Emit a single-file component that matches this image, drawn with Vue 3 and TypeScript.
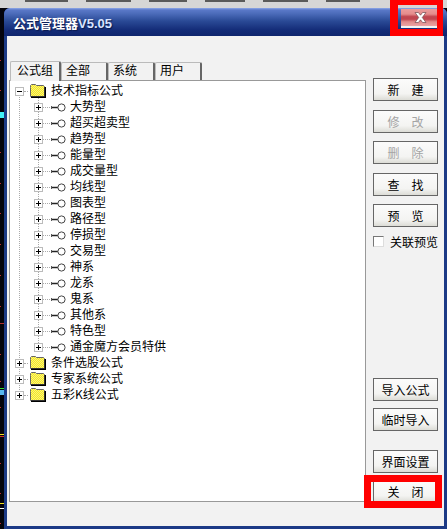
<script setup lang="ts">
const tabs = ['公式组', '全部', '系统', '用户']

const subItems = [
  '大势型', '超买超卖型', '趋势型', '能量型', '成交量型', '均线型', '图表型', '路径型',
  '停损型', '交易型', '神系', '龙系', '鬼系', '其他系', '特色型', '通金魔方会员特供',
]

const otherRoots = ['条件选股公式', '专家系统公式', '五彩K线公式']

const topButtons = [
  { label: '新　建', off: false },
  { label: '修　改', off: true },
  { label: '删　除', off: true },
  { label: '查　找', off: false },
  { label: '预　览', off: false },
]

// text fragments of the window behind the dialog
const deskBits = [43, 45, 38, 40, 45, 34]

// bits of the chart window behind the dialog
const redTicks = [60, 90, 152, 183, 213, 244, 275, 306, 354, 381, 407, 463, 493, 523]
const bars = [
  { y: 112, w: 4, h: 6, c: '#40f0f8' },
  { y: 323, w: 4, h: 1, c: '#b03030' },
  { y: 388, w: 4, h: 1, c: '#30e030' },
  { y: 390, w: 4, h: 5, c: '#58b8f0' },
  { y: 434, w: 4, h: 1, c: '#f0e020' },
  { y: 436, w: 4, h: 1, c: '#d03030' },
  { y: 503, w: 4, h: 1, c: '#f0e020' },
  { y: 508, w: 4, h: 1, c: '#ffffff' },
]
</script>

<template>
  <div class="screen">
    <svg class="defs" width="0" height="0">
      <defs>
        <pattern id="dither" width="2" height="2" patternUnits="userSpaceOnUse">
          <rect width="2" height="2" fill="#f6ea20" />
          <rect width="1" height="1" fill="#f8f080" />
          <rect x="1" y="1" width="1" height="1" fill="#f8f080" />
        </pattern>
      </defs>
    </svg>

    <div class="desk-top">
      <span v-for="(w, i) in deskBits" :key="i" class="desk-bit" :style="{ width: w + 'px' }"></span>
    </div>
    <i v-for="y in redTicks" :key="y" class="tick" :style="{ top: y + 'px' }"></i>
    <i
      v-for="b in bars"
      :key="b.y"
      class="tick"
      :style="{ top: b.y + 'px', width: b.w + 'px', height: b.h + 'px', background: b.c }"
    ></i>

    <div class="win">
      <div class="title-bar">
        <span class="title-text">公式管理器<span class="ver">V5.05</span></span>
        <span class="close-x">
          <svg width="13" height="11" viewBox="0 0 13 11">
            <path d="M1 .5h3.4l2.1 2.7L8.6.5H12L8.3 5.5 12 10.500H8.600L6.500 7.800 4.400 10.500H1l3.700-5z" fill="#fff" stroke="#6e4a50" stroke-width=".7" />
          </svg>
        </span>
      </div>

      <div class="body">
        <div class="left">
          <div class="tabs">
            <div v-for="(t, i) in tabs" :key="t" class="tab" :class="{ on: i === 0 }">{{ t }}</div>
          </div>
          <div class="tree">
            <div class="line-root"></div>
            <div class="line-sub"></div>
            <div class="row">
              <span class="twist">
                <svg width="9" height="9"><path d="M2 4.500h5" stroke="#000" /></svg>
              </span>
              <span class="dash short"></span>
              <svg class="folder" width="16" height="14" viewBox="0 0 16 14">
                <path d="M.5 3.500V1.500l1-1h4l1 1h7l1 1v10H.5z" fill="url(#dither)" stroke="#666" />
                <path d="M15.300 3v10.300H1" fill="none" stroke="#000" stroke-width="1.600" />
              </svg>
              <span class="label">技术指标公式</span>
            </div>
            <div v-for="s in subItems" :key="s" class="row sub">
              <span class="twist">
                <svg width="9" height="9"><path d="M2 4.500h5M4.500 2v5" stroke="#000" /></svg>
              </span>
              <span class="dash"></span>
              <svg class="key" width="16" height="9" viewBox="0 0 16 9">
                <path d="M1 4.500h7" stroke="#222" stroke-width="1.500" fill="none" />
                <path d="M1.500 3v3" stroke="#555" fill="none" />
                <circle cx="11.500" cy="4.500" r="3.600" fill="#fff" stroke="#444" />
              </svg>
              <span class="label">{{ s }}</span>
            </div>
            <div v-for="r in otherRoots" :key="r" class="row">
              <span class="twist">
                <svg width="9" height="9"><path d="M2 4.500h5M4.500 2v5" stroke="#000" /></svg>
              </span>
              <span class="dash short"></span>
              <svg class="folder" width="16" height="14" viewBox="0 0 16 14">
                <path d="M.5 3.500V1.500l1-1h4l1 1h7l1 1v10H.5z" fill="url(#dither)" stroke="#666" />
                <path d="M15.300 3v10.300H1" fill="none" stroke="#000" stroke-width="1.600" />
              </svg>
              <span class="label">{{ r }}</span>
            </div>
          </div>
        </div>

        <div class="side">
          <button v-for="b in topButtons" :key="b.label" class="btn top" :class="{ off: b.off }">{{ b.label }}</button>
          <label class="check"><span class="box"></span>关联预览</label>
          <div class="grow"></div>
          <button class="btn gap-a">导入公式</button>
          <button class="btn gap-b">临时导入</button>
          <button class="btn gap-a">界面设置</button>
          <button class="btn close-btn">关　闭</button>
        </div>
      </div>
    </div>

    <div class="mark mark-top"></div>
    <div class="mark mark-close"></div>
  </div>
</template>

<style>
html, body { margin: 0; background: #000; }
</style>

<style scoped>
.screen {
  position: relative;
  width: 447px;
  height: 529px;
  overflow: hidden;
  background: #04040c;
  font-family: "Noto Sans CJK SC", "Liberation Sans", sans-serif;
  font-size: 12px;
  color: #000;
}
.defs {
  position: absolute;
}
.desk-top {
  height: 8px;
  background: #d6d6d6;
  display: flex;
  gap: 18px;
  padding-left: 25px;
}
.desk-bit {
  height: 2px;
  background: #5a5a5a;
}
.tick {
  position: absolute;
  left: 0;
  width: 1px;
  height: 1px;
  background: #c03030;
}
.win {
  box-sizing: border-box;
  margin-left: 4px;
  height: 521px;
  display: flex;
  flex-direction: column;
  background: #1c3a86;
  border-radius: 6px 6px 0 0;
  padding: 0 3px 3px 3px;
}
.title-bar {
  height: 28px;
  margin: 0 -3px;
  padding: 0 3px 0 9px;
  border-radius: 6px 6px 0 0;
  background: linear-gradient(#8ea8e8 0, #5a78c8 2px, #4a6ab8 6px, #2a4a96 13px, #142c78 22px, #10266e 100%);
  display: flex;
  align-items: center;
  justify-content: space-between;
}
.title-text {
  color: #fff;
  font-weight: 700;
  font-size: 13px;
  text-shadow: 1px 1px 1px #0a1a50;
}
.ver {
  font-family: "Liberation Sans", sans-serif;
  font-size: 13px;
  color: #d8e4ff;
}
.close-x {
  width: 39px;
  height: 17px;
  margin: -7px 4px 0 0;
  display: flex;
  align-items: center;
  justify-content: center;
  background: linear-gradient(#ec9c9c 0, #e48c8c 30%, #c04650 45%, #c04650 60%, #e08a8a 75%, #eca4a4 100%);
  border-bottom: 2px solid #f4f4f4;
}
.body {
  flex: 1;
  display: flex;
  background: #f2f2f2;
  min-height: 0;
}
.left {
  width: 357px;
  margin: 24px 0 0 2px;
}
.tabs {
  height: 20px;
  display: flex;
  align-items: flex-end;
  padding-left: 1px;
}
.tab {
  width: 47px;
  height: 18px;
  line-height: 13px;
  padding-left: 4px;
  box-sizing: border-box;
  border: 1px solid #bbb;
  border-right: 2px solid #666;
  border-bottom: 0;
  border-radius: 2px 2px 0 0;
  background: #f2f2f2;
}
.tab.on {
  width: 51px;
  height: 20px;
  line-height: 15px;
  padding-left: 6px;
  position: relative;
  top: 1px;
  z-index: 1;
}
.tree {
  position: relative;
  height: 422px;
  box-sizing: border-box;
  padding-top: 2px;
  background: #fff;
  border: 1px solid #999;
}
.line-root {
  position: absolute;
  left: 9px;
  top: 10px;
  height: 305px;
  border-left: 1px dotted #aaa;
}
.line-sub {
  position: absolute;
  left: 28px;
  top: 14px;
  height: 250px;
  border-left: 1px dotted #aaa;
}
.row {
  position: relative;
  height: 16px;
  display: flex;
  align-items: center;
  padding-left: 5px;
  white-space: nowrap;
}
.row.sub {
  padding-left: 24px;
}
.twist {
  width: 9px;
  height: 9px;
  box-sizing: border-box;
  border: 1px solid #bbb;
  background: #fff;
  display: flex;
  align-items: center;
  justify-content: center;
  flex: none;
}
.twist svg {
  margin: -1px;
  flex: none;
}
.dash {
  width: 7px;
  border-top: 1px dotted #aaa;
  flex: none;
}
.dash.short {
  width: 4px;
  margin-right: 2px;
}
.folder {
  flex: none;
  margin-right: 5px;
}
.key {
  flex: none;
  margin-right: 4px;
}
.label {
  line-height: 16px;
  color: #000;
  position: relative;
  top: -1px;
}
.side {
  flex: 1;
  display: flex;
  flex-direction: column;
  padding: 42px 0 0 7px;
}
.btn {
  width: 65px;
  height: 23px;
  flex: none;
  padding: 0;
  margin: 0;
  font: inherit;
  color: #000;
  border: 1px solid #666;
  background: linear-gradient(#fbfbfb, #f4f4f2 70%, #dcdcd6);
}
.btn.top {
  margin-bottom: 8.5px;
}
.btn.off {
  color: #a4a4a4;
}
.check {
  display: flex;
  align-items: center;
  gap: 6px;
  height: 12px;
}
.box {
  width: 9px;
  height: 9px;
  background: #fff;
  border: 1px solid #777;
  border-right-color: #ddd;
  border-bottom-color: #ddd;
}
.grow {
  flex: 1;
}
.gap-a {
  margin-bottom: 7px;
}
.gap-b {
  margin-bottom: 19px;
}
.close-btn {
  margin-bottom: 23px;
}
.mark {
  position: absolute;
  box-sizing: border-box;
  border: 7px solid #f00;
}
.mark-top {
  left: 390px;
  top: 0;
  width: 53px;
  height: 36px;
  border-width: 5px 6px 7px 8px;
}
.mark-close {
  left: 364px;
  top: 475px;
  width: 78px;
  height: 33px;
}
</style>
